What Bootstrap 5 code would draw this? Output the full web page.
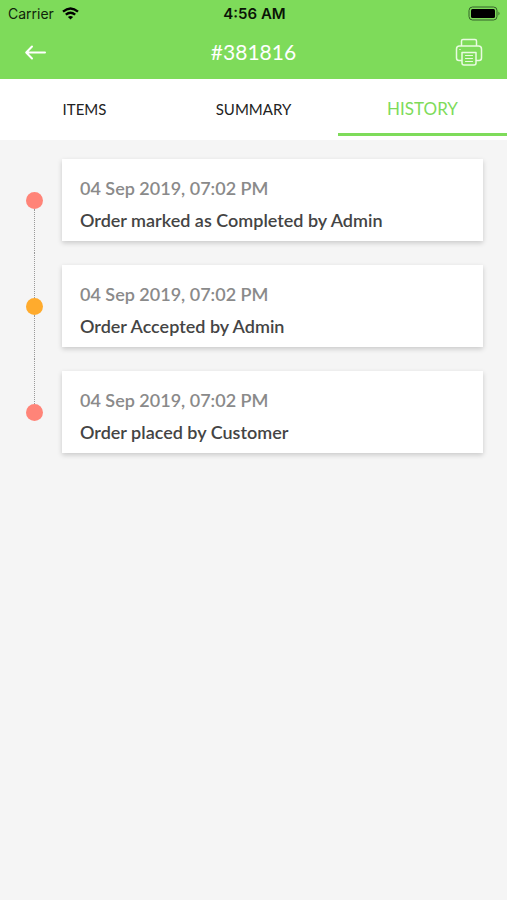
<!DOCTYPE html>
<html lang="en">
<head>
<meta charset="utf-8">
<meta name="viewport" content="width=device-width, initial-scale=1">
<title>Order #381816</title>
<link href="https://cdn.jsdelivr.net/npm/bootstrap@5.3.0/dist/css/bootstrap.min.css" rel="stylesheet">
<style>
  body { background: #f5f5f5; font-family: Lato, sans-serif; color: #444; }
  .app-top { background: #7edb5a; }
  .status-bar { height: 27px; padding: 0 6px 0 8px; font: 14px/27px Inter, sans-serif; color: #10240a; }
  .status-time { font-size: 15px; font-weight: 600; color: #0a1406; }
  .title-bar { height: 52px; padding: 0 24px 2px; }
  .title-bar h1 { font-size: 21px; line-height: 28px; color: #fff; }
  .icon-btn { line-height: 0; color: #fff; }
  .tab-strip { height: 61px; padding-bottom: 4px; }
  .tab-strip .nav-link { height: 57px; padding: 3px 0 0; border-radius: 0; font-size: 15px; line-height: 54px; color: #222; border-bottom: 3px solid transparent; }
  .tab-strip .nav-link.active { font-size: 17px; color: #7edb5a; border-bottom-color: #7edb5a; }
  .timeline { padding: 7px 24px 0 26px; }
  .rail { width: 17px; margin-right: 19px; }
  .rail-line { border-left: 1px dotted #999; }
  .timeline li:first-child .rail-line:first-child,
  .timeline li:last-child .rail-line:last-child { visibility: hidden; }
  .dot { width: 17px; height: 17px; background: #ff8478; }
  .dot-amber { background: #ffab2d; }
  .event { margin: 12px 0; padding: 13px 18px 5px; background: #fff; box-shadow: 0 2px 5px rgba(0, 0, 0, .18); font-size: 18px; line-height: 32px; font-weight: 600; }
  .event time { color: #8a8a8a; }
</style>
<script src="https://cdn.jsdelivr.net/npm/bootstrap@5.3.0/dist/js/bootstrap.bundle.min.js" defer></script>
</head>
<body>
<header class="app-top">
  <div class="status-bar row g-0 align-items-center">
    <div class="col d-flex align-items-center gap-2">
      <span>Carrier</span>
      <svg width="17" height="13" viewBox="0 0 17 13" fill="none" stroke="#000" stroke-width="2.3" aria-hidden="true"><path d="M1 4.7Q8.500-1.700 16 4.700M3.800 7.700Q8.500 3.700 13.200 7.700"/><path d="M8.500 12.600 5.900 9.900Q8.500 7.900 11.100 9.900Z" fill="#000" stroke="none"/></svg>
    </div>
    <div class="col-auto status-time">4:56 AM</div>
    <div class="col d-flex justify-content-end">
      <svg width="33" height="15" viewBox="0 0 33 15" aria-hidden="true"><rect x="1" y="1" width="28" height="13" rx="3.500" fill="none" stroke="#35622a" stroke-width="1"/><rect x="3" y="3" width="24" height="9" rx="1.500" fill="#000"/><path d="M30.500 5.500q2 2 0 4z" fill="#35622a"/></svg>
    </div>
  </div>
  <div class="title-bar d-flex align-items-center justify-content-between">
    <button class="icon-btn btn p-0 border-0" type="button" aria-label="Back">
      <svg width="28" height="28" viewBox="0 0 28 28" fill="none" stroke="#fff" stroke-width="2" stroke-linecap="round" stroke-linejoin="round"><path d="M21 14.500H2.500M8 8.500 2.200 14.500 8 20.500"/></svg>
    </button>
    <h1 class="m-0 fw-normal">#381816</h1>
    <button class="icon-btn btn p-0 border-0" type="button" aria-label="Print">
      <svg width="28" height="28" viewBox="0 0 28 28" fill="none" stroke="#e9fbe1" stroke-width="1.500" stroke-linejoin="round" stroke-linecap="round"><path d="M6.500 8V3Q6.500 1.500 8 1.500H20Q21.500 1.500 21.500 3V8M6.500 22.500H4Q1.500 22.500 1.500 20V11Q1.500 8 4.500 8H23.500Q26.500 8 26.500 11V20Q26.500 22.500 24 22.500H21.500M7 14.500H21V25Q21 27 19 27H9Q7 27 7 25Z"/><path d="M4.800 11.500h.4M10.500 17.500h7M10.500 20.500h7M10.500 23.500h7" stroke-width="1.200"/></svg>
    </button>
  </div>
</header>
<nav class="tab-strip nav nav-justified flex-nowrap bg-white" aria-label="Order sections">
  <a class="nav-link" href="#items">ITEMS</a>
  <a class="nav-link" href="#summary">SUMMARY</a>
  <a class="nav-link active" href="#history" aria-current="page">HISTORY</a>
</nav>
<main id="history">
  <ol class="timeline list-unstyled m-0">
    <li class="d-flex">
      <div class="rail d-flex flex-column align-items-center flex-shrink-0"><span class="rail-line flex-fill"></span><span class="dot rounded-circle"></span><span class="rail-line flex-fill"></span></div>
      <article class="event flex-fill"><time class="d-block" datetime="2019-09-04T19:02">04 Sep 2019, 07:02 PM</time><p class="m-0">Order marked as Completed by Admin</p></article>
    </li>
    <li class="d-flex">
      <div class="rail d-flex flex-column align-items-center flex-shrink-0"><span class="rail-line flex-fill"></span><span class="dot dot-amber rounded-circle"></span><span class="rail-line flex-fill"></span></div>
      <article class="event flex-fill"><time class="d-block" datetime="2019-09-04T19:02">04 Sep 2019, 07:02 PM</time><p class="m-0">Order Accepted by Admin</p></article>
    </li>
    <li class="d-flex">
      <div class="rail d-flex flex-column align-items-center flex-shrink-0"><span class="rail-line flex-fill"></span><span class="dot rounded-circle"></span><span class="rail-line flex-fill"></span></div>
      <article class="event flex-fill"><time class="d-block" datetime="2019-09-04T19:02">04 Sep 2019, 07:02 PM</time><p class="m-0">Order placed by Customer</p></article>
    </li>
  </ol>
</main>
</body>
</html>
